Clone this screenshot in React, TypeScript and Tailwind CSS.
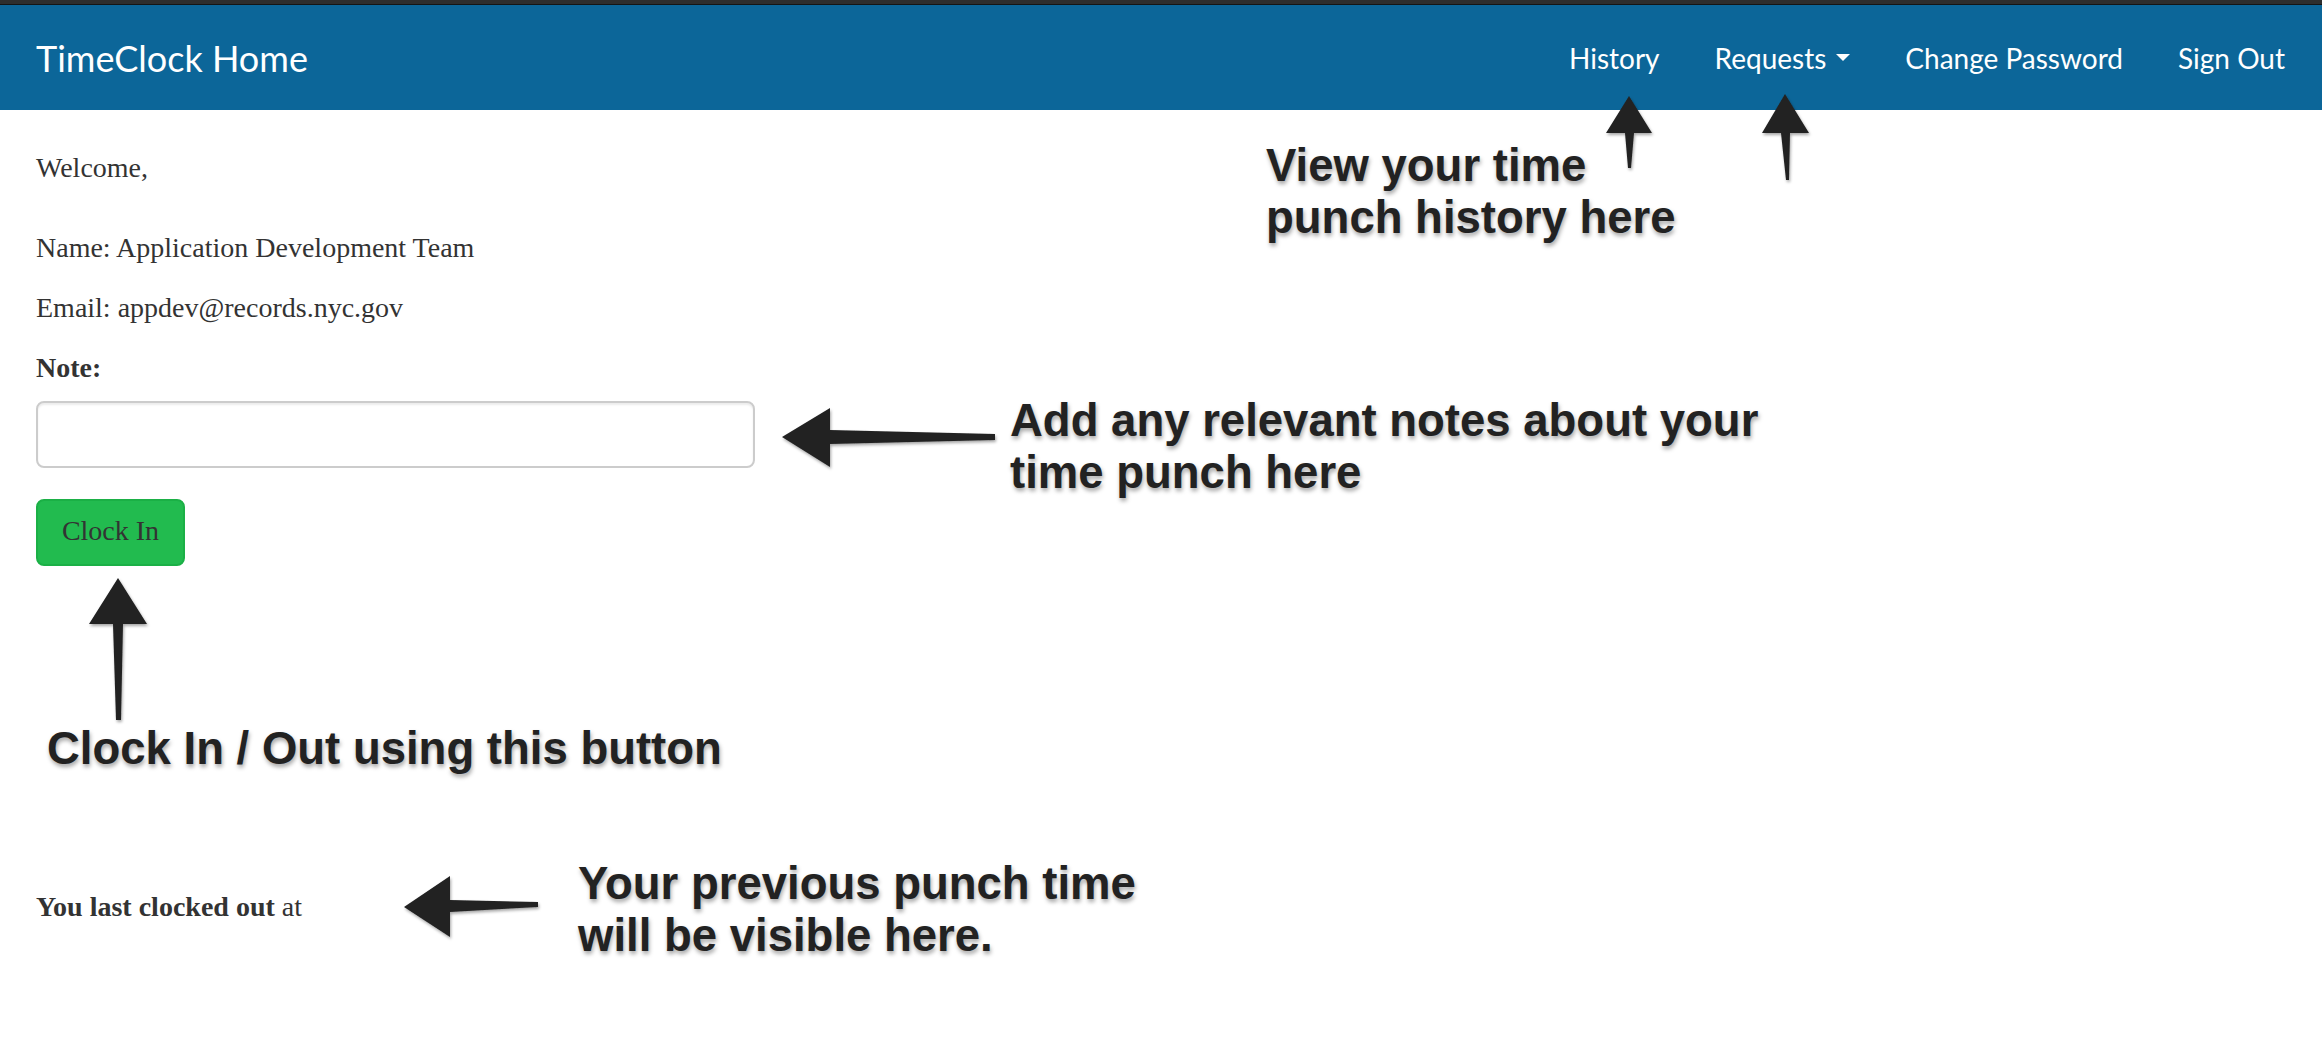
import React from "react";

const serif = { fontFamily: '"Liberation Serif", "Times New Roman", serif' };

function Annotation({ x, y, lines }: { x: number; y: number; lines: string[] }) {
  return (
    <div
      className="absolute font-bold text-[45.5px] leading-[52px] text-[#222] whitespace-nowrap [text-shadow:1px_3px_4px_rgba(0,0,0,0.35)]"
      style={{ left: x, top: y, fontFamily: '"Liberation Sans", Arial, sans-serif' }}
    >
      {lines.map((l) => (
        <div key={l}>{l}</div>
      ))}
    </div>
  );
}

export default function App() {
  return (
    <div className="relative w-[2322px] h-[1038px] bg-white overflow-hidden">
      <div className="h-[5px] bg-[#2e2e2e] border-b border-[#151515]" />
      <nav
        className="h-[105px] bg-[#0c6699] flex items-center justify-between pl-[36px] pr-[37px] text-white"
        style={{ fontFamily: 'Lato, "Open Sans", sans-serif' }}
      >
        <span className="text-[36px] leading-none">TimeClock Home</span>
        <ul className="flex items-center gap-[55px] text-[28px] leading-none">
          <li>History</li>
          <li className="flex items-center">
            Requests
            <span className="ml-[10px] w-0 h-0 border-t-[7px] border-t-white border-x-[7px] border-x-transparent" />
          </li>
          <li>Change Password</li>
          <li>Sign Out</li>
        </ul>
      </nav>

      <main className="px-[36px] pt-[38px] text-[28px] leading-[40px] text-[#333]" style={serif}>
        <p className="mb-[40px]">Welcome,</p>
        <p className="mb-[20px]">Name: Application Development Team</p>
        <p className="mb-[20px]">Email: appdev@records.nyc.gov</p>
        <p className="font-bold mb-[13px]">Note:</p>
        <input
          type="text"
          className="block w-[719px] h-[67px] border-2 border-[#cccccc] rounded-[8px] bg-white shadow-[inset_0_2px_2px_rgba(0,0,0,0.08)]"
        />
        <button
          className="mt-[31px] w-[149px] h-[67px] pb-[4px] rounded-[8px] bg-[#22bb4f] border-2 border-[#1bb046] text-[#333] text-[28px] flex items-center justify-center"
          style={serif}
        >
          Clock In
        </button>
        <p className="mt-[321px]">
          <b>You last clocked out</b> at
        </p>
      </main>

      <svg
        className="absolute left-0 top-0 pointer-events-none"
        width="2322"
        height="1038"
        viewBox="0 0 2322 1038"
      >
        <defs>
          <filter id="sh" x="-20%" y="-20%" width="140%" height="140%">
            <feDropShadow dx="1" dy="2" stdDeviation="1.5" floodColor="#000" floodOpacity="0.35" />
          </filter>
        </defs>
        <g fill="#222" filter="url(#sh)">
          <polygon points="1629,96 1652,133 1634,133 1631,168 1628,168 1625,133 1606,133" />
          <polygon points="1785,94 1809,133 1790,133 1789,180 1786,180 1781,133 1762,133" />
          <polygon points="782,437 830,408 830,430 995,434 995,440 830,444 830,467" />
          <polygon points="118,578 147,624 123,624 121,720 116,720 113,624 89,624" />
          <polygon points="404,907 450,876 450,900 538,902 538,907 450,912 450,937" />
        </g>
      </svg>

      <Annotation x={1266} y={140} lines={["View your time", "punch history here"]} />
      <Annotation x={1010} y={395} lines={["Add any relevant notes about your", "time punch here"]} />
      <Annotation x={47} y={723} lines={["Clock In / Out using this button"]} />
      <Annotation x={578} y={858} lines={["Your previous punch time", "will be visible here."]} />
    </div>
  );
}
